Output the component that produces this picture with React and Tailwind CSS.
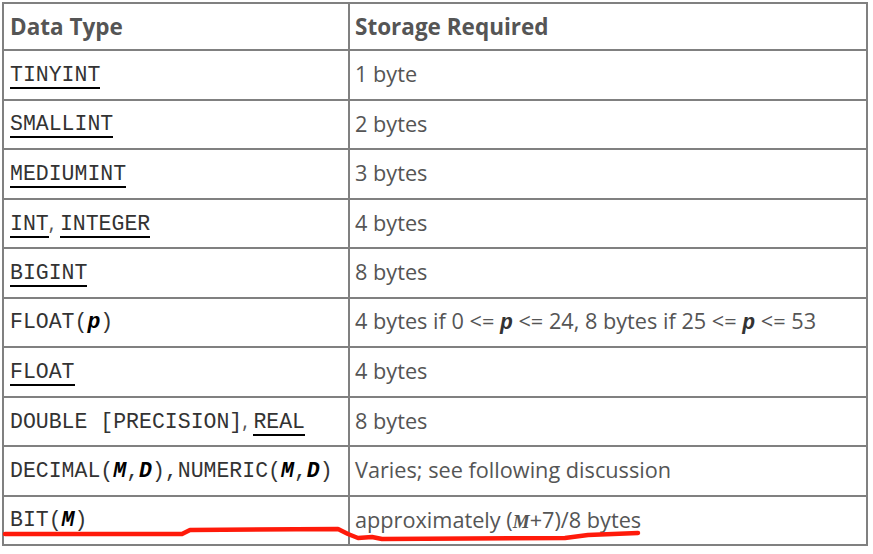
import React from "react";

const monoFont = "font-['Courier_New','Nimbus_Mono_PS','FreeMono','Liberation_Mono',monospace]";
const mono = monoFont + " text-[21.5px] text-[#333]";

const Link = ({ children }) => (
  <span className="inline-block border-b-2 border-black leading-[24px]">{children}</span>
);

const Arg = ({ children }) => <b className="italic font-bold text-black">{children}</b>;

const Sep = ({ children }) => (
  <span className="font-['Open_Sans',sans-serif] text-[21.5px] text-[#555]">{children}</span>
);

const rows = [
  { type: <Link>TINYINT</Link>, size: "1 byte" },
  { type: <Link>SMALLINT</Link>, size: "2 bytes" },
  { type: <Link>MEDIUMINT</Link>, size: "3 bytes" },
  {
    type: (
      <>
        <Link>INT</Link>
        <Sep>, </Sep>
        <Link>INTEGER</Link>
      </>
    ),
    size: "4 bytes",
  },
  { type: <Link>BIGINT</Link>, size: "8 bytes" },
  {
    type: (
      <>
        FLOAT(<Arg>p</Arg>)
      </>
    ),
    size: (
      <>
        4 bytes if 0 &lt;= <span className={mono + " font-bold italic"}>p</span> &lt;= 24, 8 bytes if 25 &lt;={" "}
        <span className={mono + " font-bold italic"}>p</span> &lt;= 53
      </>
    ),
  },
  { type: <Link>FLOAT</Link>, size: "4 bytes" },
  {
    type: (
      <>
        DOUBLE [PRECISION]
        <Sep>, </Sep>
        <Link>REAL</Link>
      </>
    ),
    size: "8 bytes",
  },
  {
    type: (
      <>
        DECIMAL(<Arg>M</Arg>,<Arg>D</Arg>),NUMERIC(<Arg>M</Arg>,<Arg>D</Arg>)
      </>
    ),
    size: "Varies; see following discussion",
  },
  {
    type: (
      <>
        BIT(<Arg>M</Arg>)
      </>
    ),
    size: (
      <>
        approximately (<span className="font-['Liberation_Serif',serif] font-bold italic text-[19px]">M</span>+7)/8 bytes
      </>
    ),
  },
];

export default function App() {
  return (
    <div className="relative w-[873px] h-[554px] bg-white pl-[2px] pt-[2px]">
      <table className="table-fixed w-[866px] border-collapse border-2 border-[#808080] font-['Open_Sans',sans-serif] text-[#555]">
        <colgroup>
          <col className="w-[346px]" />
          <col />
        </colgroup>
        <thead>
          <tr className="h-[47px]">
            <th className="border-2 border-[#808080] px-[6px] text-left text-[22.5px] font-bold">Data Type</th>
            <th className="border-2 border-[#808080] px-[5px] text-left text-[22.5px] font-bold">Storage Required</th>
          </tr>
        </thead>
        <tbody>
          {rows.map((r, i) => (
            <tr key={i} className="h-[49.5px]">
              <td className={"border-2 border-[#808080] px-[6px] whitespace-nowrap " + mono}>{r.type}</td>
              <td className="border-2 border-[#808080] px-[5px] text-[21.7px] whitespace-nowrap">{r.size}</td>
            </tr>
          ))}
        </tbody>
      </table>
      <svg className="absolute left-0 top-0 pointer-events-none" width="873" height="554" viewBox="0 0 873 554">
        <path
          d="M5 534 L182 534 L190 530 L338 529 L348 534 L358 538 L372 537 L382 539 L565 538 L588 535 L638 533"
          fill="none"
          stroke="#ff1a0a"
          strokeWidth="4.5"
          strokeLinecap="round"
          strokeLinejoin="round"
        />
      </svg>
    </div>
  );
}
